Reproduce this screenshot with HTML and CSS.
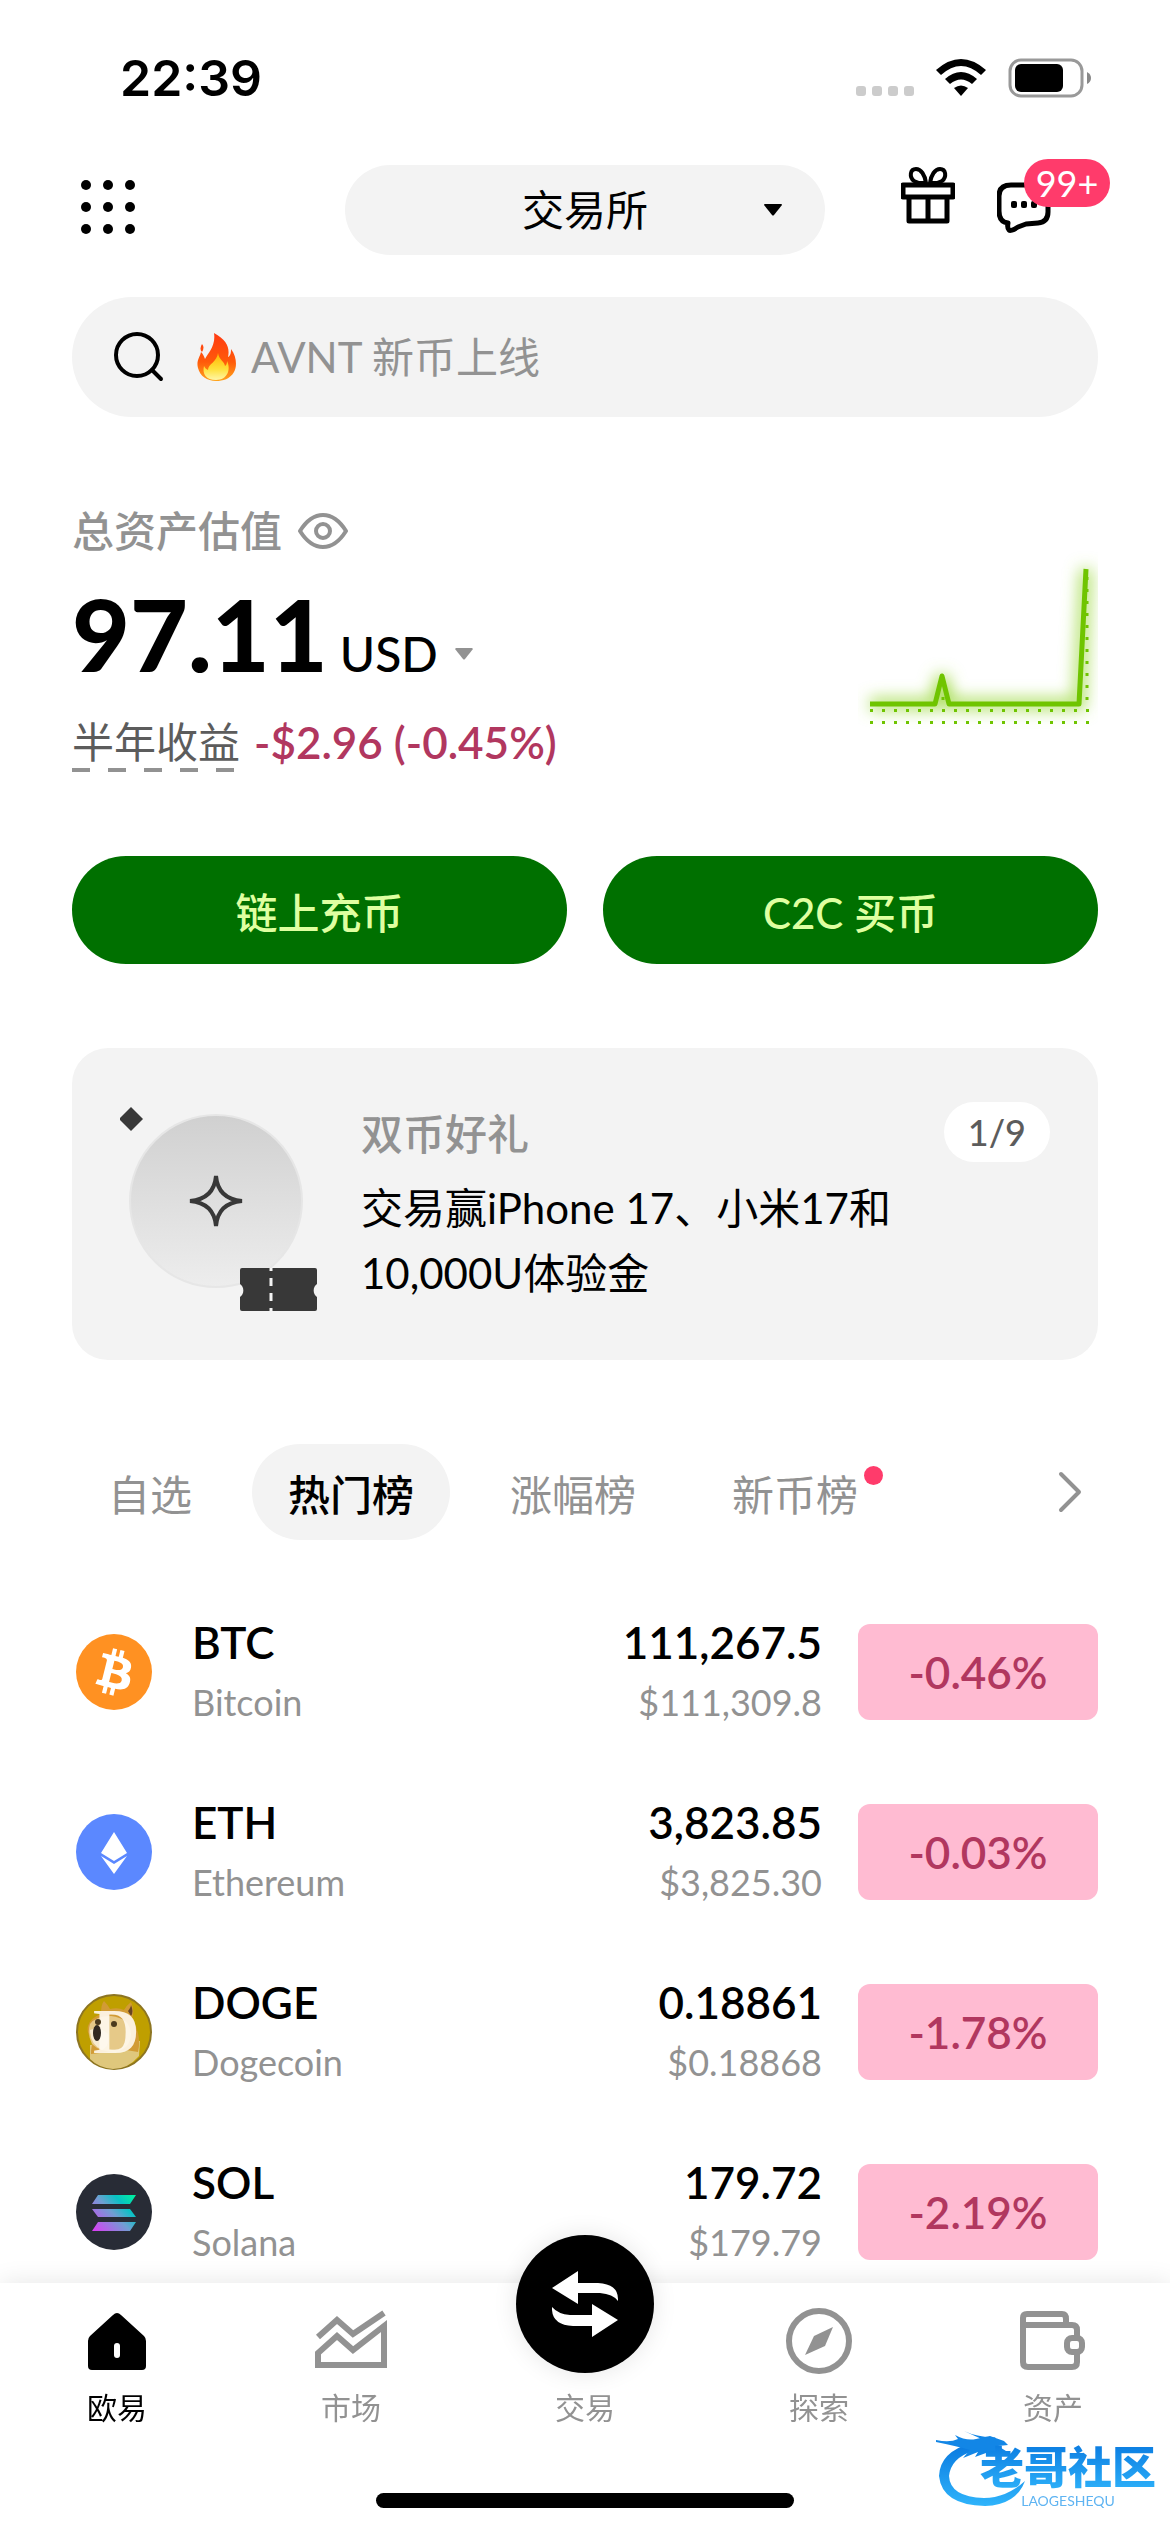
FILE: index.html
```html
<!DOCTYPE html>
<html lang="zh-CN">
<head>
  <meta charset="UTF-8" />
  <meta name="viewport" content="width=device-width, initial-scale=1" />
  <title>欧易</title>
  <link rel="stylesheet" href="styles.css">
</head>
<body>
  <div class="status-bar">
    <span class="time">22:39</span>
    <svg class="status-icons" width="240" height="48" viewBox="0 0 240 48">
      <g fill="#cccccc">
        <rect x="2" y="32" width="10" height="10" rx="3"/>
        <rect x="18" y="32" width="10" height="10" rx="3"/>
        <rect x="34" y="32" width="10" height="10" rx="3"/>
        <rect x="50" y="32" width="10" height="10" rx="3"/>
      </g>
      <path d="M82 16 Q107 -6 132 16 L127 21 Q107 3 87 21 Z"/>
      <path d="M91 25 Q107 11 123 25 L118 30 Q107 21 96 30 Z"/>
      <path d="M100 34 Q107 29 114 34 L107 42 Z"/>
      <rect x="156" y="6" width="72" height="36" rx="11" fill="none" stroke="#999999" stroke-width="3"/>
      <rect x="161" y="10" width="48" height="28" rx="6"/>
      <path d="M233 18 Q237 20 237 24 Q237 28 233 30 Z" fill="#888888"/>
    </svg>
  </div>

  <header class="header">
    <button class="icon-btn" aria-label="菜单">
      <svg width="72" height="90" viewBox="0 0 72 90">
        <circle cx="14" cy="20" r="5"/><circle cx="36" cy="20" r="5"/><circle cx="58" cy="20" r="5"/>
        <circle cx="14" cy="42" r="5"/><circle cx="36" cy="42" r="5"/><circle cx="58" cy="42" r="5"/>
        <circle cx="14" cy="64" r="5"/><circle cx="36" cy="64" r="5"/><circle cx="58" cy="64" r="5"/>
      </svg>
    </button>

    <div class="mode">
      <select class="mode-select" aria-label="模式">
        <option>交易所</option>
      </select>
      <svg class="mode-caret" width="18" height="12" viewBox="0 0 18 12"><path d="M1 0h16q1 0 1 1L10 11q-1 1-2 0L0 1q0-1 1-1z"/></svg>
    </div>

    <div class="header-actions">
      <button class="icon-btn" aria-label="礼物">
        <svg width="54" height="90" viewBox="0 0 54 90" fill="none" stroke="#000" stroke-width="5" stroke-linejoin="round">
          <rect x="2" y="20" width="50" height="12"/>
          <path d="M8 32v24h38V32M27 32v24"/>
          <path d="M25 18C24 10 20 4 15 4C9 4 8 12 13 16L18 18zM29 18C30 10 34 4 39 4C45 4 46 12 41 16L36 18z" stroke-width="4"/>
        </svg>
      </button>
      <button class="icon-btn chat-btn" aria-label="消息">
        <svg width="54" height="90" viewBox="0 0 54 90">
          <path d="M14 20h26q11 0 11 11v16q0 10-10 11l-12 1l-8 3q-8 5-9 3q-2-2-1-7q-9-1-9-12V31q0-11 12-11z" fill="none" stroke="#000" stroke-width="5" stroke-linejoin="round"/>
          <rect x="14" y="36" width="6" height="7" rx="2"/><rect x="24" y="36" width="6" height="7" rx="2"/><rect x="34" y="36" width="6" height="7" rx="2"/>
        </svg>
        <span class="count">99+</span>
      </button>
    </div>
  </header>

  <main>
    <label class="search">
      <svg width="50" height="50" viewBox="0 0 50 50" fill="none" stroke="#000" stroke-width="4" stroke-linecap="round">
        <circle cx="23" cy="23" r="21"/><path d="M38 38l9 9"/>
      </svg>
      <svg class="fire" width="39" height="48" viewBox="0 0 39 48">
        <defs>
          <linearGradient id="flame" x1="0" y1="0" x2="0" y2="1"><stop offset="0" stop-color="#ff3a12"/><stop offset="0.6" stop-color="#ff5a0a"/><stop offset="1" stop-color="#ffa51c"/></linearGradient>
          <linearGradient id="core" x1="0" y1="0" x2="0" y2="1"><stop offset="0" stop-color="#ffb300"/><stop offset="0.6" stop-color="#ffe13c"/><stop offset="1" stop-color="#fff6a8"/></linearGradient>
        </defs>
        <path d="M17 0C30 7 33 15 31 24C34 23 34 18 34 16C40 24 40 34 37 39C33 46 26 48 19 48C10 48 3 43 1 35C-1 28 3 24 4 19C6 21 7 23 8 26C11 20 19 13 17 0zM5 11Q8 14 5 19Q2 16 5 11z" fill="url(#flame)"/>
        <path d="M21 20C22 27 27 28 28 33C30 32 30 29 30 28C34 36 31 47 19 47C9 47 5 41 7 33C8 35 9 36 11 37C11 31 20 29 21 20z" fill="url(#core)"/>
      </svg>
      <input type="text" placeholder="AVNT 新币上线" aria-label="搜索">
    </label>

    <section class="assets">
      <div>
        <div class="assets-label">
          <span>总资产估值</span>
          <svg width="50" height="38" viewBox="0 0 50 38" fill="none" stroke="#929292" stroke-width="4">
            <path d="M2 19Q12 3 25 3T48 19Q38 35 25 35T2 19z" stroke-linejoin="round"/><circle cx="25" cy="19" r="7"/>
          </svg>
        </div>
        <div class="amount">
          <strong>97.11</strong>
          <select class="currency" aria-label="币种"><option>USD</option></select>
          <svg width="18" height="24" viewBox="0 0 18 24"><path d="M1 0h16l1 1-8 10q-1 1-2 0L0 1z" fill="#929292"/></svg>
        </div>
        <div class="pnl">
          <span class="pnl-label">半年收益</span>
          <span class="pnl-value">-$2.96 (-0.45%)</span>
        </div>
      </div>
      <svg class="chart" width="240" height="192" viewBox="0 0 240 192">
        <defs>
          <filter id="glow" x="-20%" y="-20%" width="140%" height="140%"><feGaussianBlur stdDeviation="8"/></filter>
        </defs>
        <polyline points="12,156 77,156 84,128 91,156 221,156 228,21" fill="none" stroke="#a4dc50" stroke-width="11" filter="url(#glow)"/>
        <path d="M12 162.500H231M12 174.500H231" stroke="#6fc400" stroke-width="3" stroke-dasharray="3 9"/>
        <path d="M229 29V160M85 149v3" stroke="#6fc400" stroke-width="3" stroke-dasharray="3 9"/>
        <polyline points="12,156 77,156 84,128 91,156 221,156 228,21" fill="none" stroke="#6fc400" stroke-width="5" stroke-linejoin="round"/>
      </svg>
    </section>

    <div class="actions">
      <button class="btn-green">链上充币</button>
      <button class="btn-green">C2C 买币</button>
    </div>

    <section class="promo">
      <svg class="promo-art" width="204" height="216" viewBox="3 0 204 216">
        <defs>
          <linearGradient id="disc" x1="0" y1="0" x2="0" y2="1"><stop offset="0" stop-color="#d0d0d0"/><stop offset="1" stop-color="#ededed"/></linearGradient>
        </defs>
        <circle cx="99" cy="105" r="86" fill="url(#disc)" stroke="#e6e6e6" stroke-width="2"/>
        <path d="M14 11l12 12-12 12L2 23z" fill="#383838"/>
        <path d="M99 80Q101 103 125 105Q101 107 99 130Q97 107 73 105Q97 103 99 80z" fill="none" stroke="#383838" stroke-width="4"/>
        <path d="M125 172h73q2 0 2 2v14a8 8 0 0 0 0 13v12q0 2-2 2h-73q-2 0-2-2v-12a8 8 0 0 0 0-13v-14q0-2 2-2z" fill="#383838"/>
        <path d="M154 172v3M154 182v8M154 197v8M154 212v3" stroke="#f3f3f3" stroke-width="3"/>
      </svg>
      <div class="promo-text">
        <h2>双币好礼</h2>
        <p>交易赢iPhone 17、小米17和<br>10,000U体验金</p>
      </div>
      <span class="pager">1/9</span>
    </section>

    <nav class="tabs">
      <button>自选</button>
      <button class="active">热门榜</button>
      <button>涨幅榜</button>
      <button class="has-dot">新币榜</button>
      <button class="more" aria-label="更多">
        <svg width="24" height="42" viewBox="0 0 24 42" fill="none" stroke="#929292" stroke-width="4" stroke-linecap="round" stroke-linejoin="round"><path d="M3 3l18 18L3 39"/></svg>
      </button>
    </nav>

    <table class="coins">
      <tr>
        <td class="logo">
          <svg width="76" height="76" viewBox="0 0 32 32">
            <circle cx="16" cy="16" r="16" fill="#ff9122"/>
            <path fill="#fff" d="M23.189 14.02c.314-2.096-1.283-3.223-3.465-3.975l.708-2.84-1.728-.43-.69 2.765c-.454-.114-.92-.22-1.385-.326l.695-2.783L15.596 6l-.708 2.839c-.376-.086-.746-.17-1.104-.26l.002-.009-2.384-.595-.46 1.846s1.283.294 1.256.312c.7.175.826.638.805 1.006l-.806 3.235c.048.012.11.03.18.057l-.183-.045-1.13 4.532c-.086.212-.303.531-.793.41.018.025-1.256-.313-1.256-.313l-.858 1.978 2.25.561c.418.105.828.215 1.231.318l-.715 2.872 1.727.43.708-2.84c.472.127.93.245 1.378.357l-.706 2.828 1.728.43.715-2.866c2.948.558 5.164.333 6.097-2.333.752-2.146-.037-3.385-1.588-4.192 1.13-.26 1.98-1.003 2.207-2.538zm-3.95 5.538c-.533 2.147-4.148.986-5.32.695l.95-3.805c1.172.293 4.929.872 4.37 3.11zm.535-5.569c-.487 1.953-3.495.96-4.47.717l.86-3.45c.975.243 4.118.696 3.61 2.733z"/>
          </svg>
        </td>
        <th scope="row">BTC<small>Bitcoin</small></th>
        <td class="price">111,267.5<small>$111,309.8</small></td>
        <td class="change"><span>-0.46%</span></td>
      </tr>
      <tr>
        <td class="logo">
          <svg width="76" height="76" viewBox="0 0 76 76">
            <circle cx="38" cy="38" r="38" fill="#5b88ff"/>
            <path d="M38 18l13 21-13 8-13-8zM25 42l13 8 13-8-13 18z" fill="#fff"/>
          </svg>
        </td>
        <th scope="row">ETH<small>Ethereum</small></th>
        <td class="price">3,823.85<small>$3,825.30</small></td>
        <td class="change"><span>-0.03%</span></td>
      </tr>
      <tr>
        <td class="logo">
          <svg width="76" height="76" viewBox="0 0 76 76">
            <circle cx="38" cy="38" r="37" fill="#bf9f00" stroke="#8d7522" stroke-width="2"/>
            <path d="M14 51L64 47L63 62Q52 75 37 75Q23 74 14 65z" fill="#dfc77c"/>
            <path d="M25 20Q25 10 28 7Q32 11 34 15Q42 13 48 16Q51 11 55 8Q59 17 56 24Q66 42 62 58L50 56L15 60Q15 50 18 48Q10 40 12 32Q14 24 25 20z" fill="#d29b35"/>
            <path d="M52 17Q55 13 55 11Q58 18 55 22z" fill="#674525"/>
            <path d="M14 30Q20 22 35 22Q54 24 55 40Q54 55 39 58Q24 58 16 50Q11 40 14 30z" fill="#e6c988"/>
            <path d="M14 36Q24 32 32 40Q34 52 26 56Q14 50 14 36z" fill="#f6ead0"/>
            <text class="doge-letter" x="17" y="59">D</text>
            <ellipse cx="21" cy="39" rx="4" ry="8" fill="#302820"/>
            <circle cx="22" cy="28" r="3" fill="#4b3a1d"/><circle cx="38" cy="30" r="3" fill="#4b3a1d"/>
          </svg>
        </td>
        <th scope="row">DOGE<small>Dogecoin</small></th>
        <td class="price">0.18861<small>$0.18868</small></td>
        <td class="change"><span>-1.78%</span></td>
      </tr>
      <tr>
        <td class="logo">
          <svg width="76" height="76" viewBox="0 0 76 76">
            <defs>
              <linearGradient id="sol" gradientUnits="userSpaceOnUse" x1="18" y1="58" x2="56" y2="20"><stop offset="0" stop-color="#dc3cf5"/><stop offset="0.5" stop-color="#6f9fd2"/><stop offset="0.75" stop-color="#09c2c4"/><stop offset="1" stop-color="#00efa0"/></linearGradient>
            </defs>
            <circle cx="38" cy="38" r="38" fill="#282c36"/>
            <path d="M22 21h38l-6 9H16zM16 35h38l6 8H22zM22 48h38l-6 9H16z" fill="url(#sol)"/>
          </svg>
        </td>
        <th scope="row">SOL<small>Solana</small></th>
        <td class="price">179.72<small>$179.79</small></td>
        <td class="change"><span>-2.19%</span></td>
      </tr>
    </table>
  </main>

  <footer class="bottom-bar">
    <nav class="bottom-nav">
      <a href="#" class="current">
        <svg width="72" height="72" viewBox="0 0 72 72"><path d="M36 8q2 0 4 2l23 21q2 2 2 5v25q0 4-4 4H11q-4 0-4-4V36q0-3 2-5L32 10q2-2 4-2z"/><rect x="33" y="38" width="6" height="15" rx="3" fill="#fff"/></svg>
        欧易
      </a>
      <a href="#">
        <svg width="72" height="72" viewBox="0 0 72 72" fill="none" stroke="#929292" stroke-width="6"><path d="M3 32L22 15l16 14L69 8"/><path d="M3 60V48L22 31l16 14L69 21v39z"/></svg>
        市场
      </a>
      <a href="#">
        <span class="trade">
          <svg width="138" height="138" viewBox="0 0 138 138" fill="#fff"><path d="M36 53L62 36v12h20q20 1 20 16v2q-5-7-18-8H62v11z"/><path d="M102 85L76 102V91H57q-20-1-21-16v-3q6 7 18 8h22V69z"/></svg>
        </span>
        交易
      </a>
      <a href="#">
        <svg width="72" height="72" viewBox="0 0 72 72"><circle cx="36" cy="36" r="30" fill="none" stroke="#929292" stroke-width="6"/><path d="M50 22L42 41L22 50L31 31z" fill="#929292"/></svg>
        探索
      </a>
      <a href="#">
        <svg width="72" height="72" viewBox="0 0 72 72" fill="none" stroke="#929292" stroke-width="6"><path d="M49 20V14q0-5-4-5H10q-4 0-4 4v44q0 5 5 5h44q5 0 5-5V48M6 20h49q5 0 5 5v8"/><rect x="50" y="33" width="15" height="14" rx="5"/></svg>
        资产
      </a>
    </nav>
    <div class="home-indicator"></div>
  </footer>

  <div class="watermark">
    <svg width="100" height="84" viewBox="0 0 100 84">
      <defs>
        <linearGradient id="water" x1="0" y1="0" x2="0" y2="1"><stop offset="0" stop-color="#0978df"/><stop offset="1" stop-color="#2fb4fb"/></linearGradient>
      </defs>
      <path d="M35 15Q4 24 3 48Q6 77 49 78Q80 77 89 53Q70 70 48 70Q14 69 13 48Q15 30 37 23z" fill="url(#water)"/>
      <path d="M0 12Q14 15 22 11L19 7Q30 13 40 11L54 8L68 13L72 17L62 18L70 23L59 23L65 28L50 25L39 29L42 24L27 30L34 22Q20 18 0 14zM28 3Q43 10 60 9L50 13z" fill="#1286e6"/>
    </svg>
    <div class="watermark-text">
      <b>老哥社区</b>
      <i>LAOGESHEQU</i>
    </div>
  </div>
</body>
</html>
```
FILE: styles.css
```css
* {
  box-sizing: border-box;
}
body {
  margin: 0;
  background: white;
  color: black;
  font-family: Lato, "Noto Sans CJK SC", sans-serif;
  font-size: 42px;
}
svg {
  display: block;
  flex-shrink: 0;
}
button, select, input {
  font: inherit;
  color: inherit;
  border: none;
  background: none;
  padding: 0;
  margin: 0;
}
button {
  cursor: pointer;
}
select {
  appearance: none;
}
main {
  padding: 0 72px 200px;
}

/* Status bar */
.status-bar {
  display: flex;
  justify-content: space-between;
  align-items: center;
  height: 156px;
  padding: 0 76px 0 120px;
}
.time {
  font-family: Inter, sans-serif;
  font-size: 50px;
  font-weight: 600;
}

/* Header */
.header {
  display: grid;
  grid-template-columns: 1fr minmax(0, 480px) 1fr;
  padding: 9px 72px 42px;
}
.icon-btn {
  justify-self: start;
}
.mode {
  position: relative;
}
.mode-select {
  width: 100%;
  height: 90px;
  border-radius: 45px;
  background: #f3f3f3;
  text-align: center;
  text-align-last: center;
}
.mode-caret {
  position: absolute;
  right: 43px;
  top: 39px;
  pointer-events: none;
}
.header-actions {
  display: flex;
  justify-content: flex-end;
  gap: 42px;
  padding-right: 47px;
}
.chat-btn {
  position: relative;
}
.count {
  position: absolute;
  left: 27px;
  top: -6px;
  width: 86px;
  border-radius: 24px;
  background: #ff3b6b;
  color: white;
  font-size: 36px;
  line-height: 48px;
}

/* Search */
.search {
  display: flex;
  align-items: center;
  height: 120px;
  padding: 0 42px;
  border-radius: 60px;
  background: #f3f3f3;
}
.fire {
  margin: 0 15px 0 33px;
}
.search input {
  flex: 1;
  min-width: 0;
  outline: none;
}
.search input::placeholder {
  color: #929292;
  opacity: 1;
}

/* Assets */
.assets {
  display: flex;
  justify-content: space-between;
  padding-top: 84px;
}
.assets-label {
  display: flex;
  align-items: center;
  gap: 16px;
  line-height: 60px;
  color: #929292;
  font-weight: 500;
}
.amount {
  display: flex;
  align-items: baseline;
  height: 151px;
  line-height: 144px;
}
.amount strong {
  font-size: 100px;
  font-weight: 900;
}
.currency {
  margin: 0 16px 0 12px;
  font-size: 48px;
  font-weight: 500;
}
.pnl {
  display: flex;
  gap: 14px;
  line-height: 60px;
}
.pnl-label {
  color: #5c5c5c;
  background: repeating-linear-gradient(90deg, #929292 0 18px, transparent 18px 36px) left bottom / 100% 4px no-repeat;
}
.pnl-value {
  color: #b1375f;
  font-size: 44px;
  font-weight: 600;
}
.chart {
  margin-top: 47px;
}

/* Buttons */
.actions {
  display: flex;
  gap: 36px;
  margin-top: 84px;
}
.btn-green {
  flex: 1;
  height: 108px;
  border-radius: 54px;
  background: #007000;
  color: #dfffa0;
  font-weight: 500;
}

/* Promo card */
.promo {
  display: flex;
  align-items: flex-start;
  height: 312px;
  margin-top: 84px;
  padding: 48px;
  border-radius: 36px;
  background: #f3f3f3;
}
.promo-text {
  flex: 1;
  margin-left: 37px;
}
.promo h2 {
  margin: 8px 0 12px;
  font-size: 42px;
  line-height: 60px;
  font-weight: 500;
  color: #929292;
}
.promo p {
  margin: 0;
  line-height: 65px;
}
.pager {
  margin-top: 6px;
  padding: 0 24px;
  border-radius: 30px;
  background: white;
  color: #5c5c5c;
  font-size: 36px;
  font-weight: 500;
  line-height: 60px;
}

/* Tabs */
.tabs {
  display: flex;
  gap: 24px;
  margin: 84px 0 42px;
}
.tabs button {
  height: 96px;
  padding: 0 36px;
  border-radius: 48px;
  color: #929292;
}
.tabs .active {
  background: #f3f3f3;
  color: black;
  font-weight: 500;
}
.has-dot {
  position: relative;
}
.has-dot::after {
  content: "";
  position: absolute;
  right: 11px;
  top: 22px;
  width: 19px;
  height: 19px;
  border-radius: 50%;
  background: #ff3b6b;
}
.tabs .more {
  margin-left: auto;
  padding: 0 16px;
}

/* Coin list */
.coins {
  width: 100%;
  border-collapse: collapse;
  font-size: 44px;
  line-height: 54px;
  font-weight: 600;
}
.coins tr {
  height: 180px;
}
.coins td, .coins th {
  padding: 0;
  text-align: left;
  font-weight: 600;
}
.coins small {
  display: block;
  margin-top: 6px;
  font-size: 36px;
  line-height: 54px;
  font-weight: 400;
  color: #929292;
}
.coins .logo {
  width: 120px;
  padding-left: 4px;
}
.coins .price {
  padding-right: 36px;
  text-align: right;
}
.coins .change {
  width: 240px;
}
.change span {
  display: block;
  border-radius: 12px;
  background: #ffbbd2;
  color: #b1375f;
  line-height: 96px;
  text-align: center;
}
.doge-letter {
  font-family: "Liberation Serif", serif;
  font-size: 64px;
  font-weight: 700;
  fill: #fffaf0;
  fill-opacity: 0.9;
}

/* Bottom bar */
.bottom-bar {
  position: fixed;
  left: 0;
  right: 0;
  bottom: 0;
  padding: 22px 0 24px;
  background: white;
  box-shadow: 0 0 24px rgba(0, 0, 0, 0.1);
}
.bottom-nav {
  display: grid;
  grid-template-columns: repeat(5, 1fr);
}
.bottom-nav a {
  position: relative;
  display: flex;
  flex-direction: column;
  align-items: center;
  gap: 8px;
  color: #929292;
  font-size: 30px;
  line-height: 44px;
  text-decoration: none;
}
.bottom-nav .current {
  color: black;
}
.trade {
  width: 138px;
  height: 138px;
  margin-top: -70px;
  margin-bottom: 4px;
  border-radius: 50%;
  background: black;
  box-shadow: 0 0 24px rgba(0, 0, 0, 0.1);
}
.home-indicator {
  width: 418px;
  height: 15px;
  margin: 64px auto 0;
  border-radius: 8px;
  background: black;
}

/* Watermark */
.watermark {
  position: fixed;
  right: 14px;
  bottom: 20px;
  display: flex;
}
.watermark-text {
  display: flex;
  flex-direction: column;
  margin: 12px 0 0 -56px;
}
.watermark b {
  font-size: 44px;
  line-height: 54px;
  font-weight: 900;
  color: transparent;
  background: linear-gradient(#0978df, #2fb4fb);
  background-clip: text;
}
.watermark i {
  align-self: center;
  font-size: 14px;
  line-height: 14px;
  font-style: normal;
  color: #5fb4f2;
}
```
